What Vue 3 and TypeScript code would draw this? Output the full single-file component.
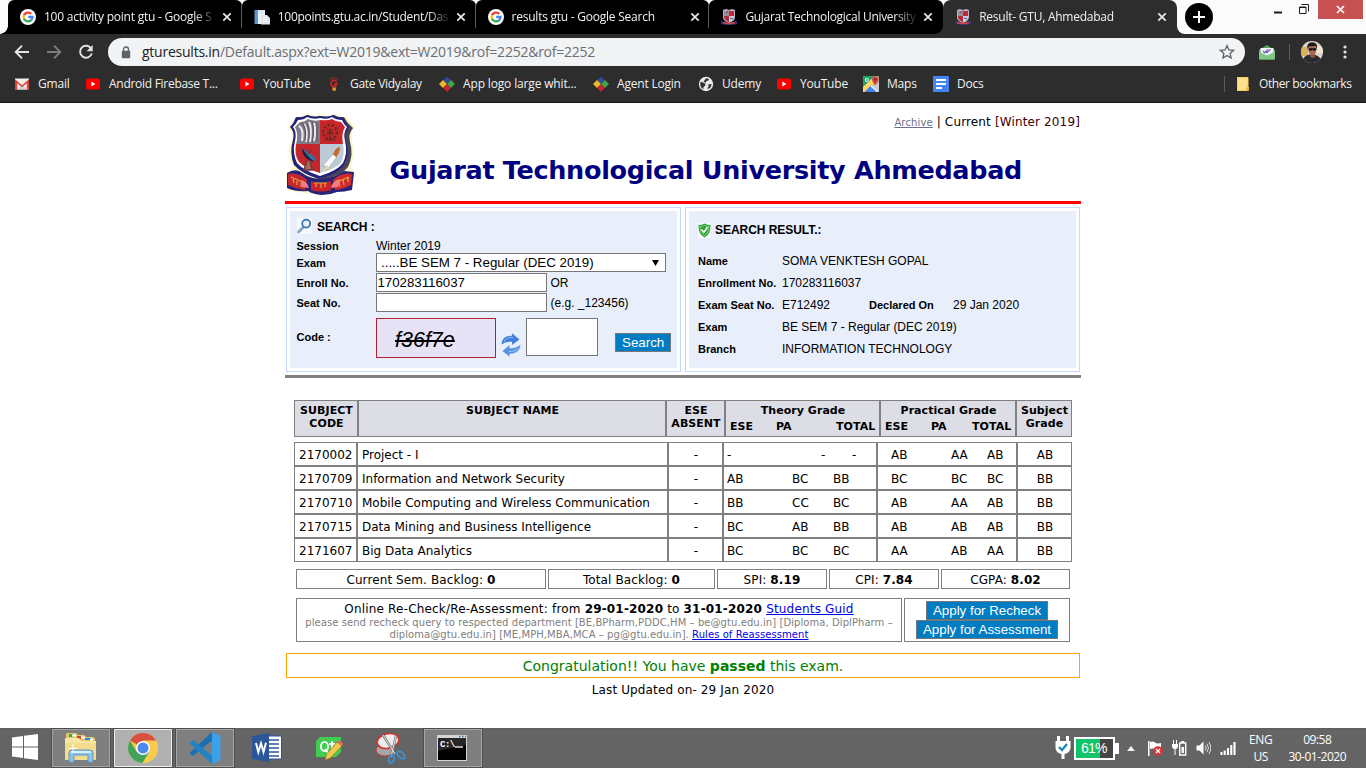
<script setup lang="ts">
interface Tab { title: string; icon: string; active?: boolean }
interface Bookmark { label: string; icon: string }
interface Subject {
  code: string
  name: string
  absent: string
  theory: [string, string, string]
  practical: [string, string, string]
  grade: string
}

const tabs: Tab[] = [
  { title: '100 activity point gtu - Google S', icon: 'google' },
  { title: '100points.gtu.ac.in/Student/Das', icon: 'page' },
  { title: 'results gtu - Google Search', icon: 'google' },
  { title: 'Gujarat Technological University', icon: 'crest-mini' },
  { title: 'Result- GTU, Ahmedabad', icon: 'crest-mini', active: true },
]

const bookmarks: Bookmark[] = [
  { label: 'Gmail', icon: 'gmail' },
  { label: 'Android Firebase T...', icon: 'youtube' },
  { label: 'YouTube', icon: 'youtube' },
  { label: 'Gate Vidyalay', icon: 'gate' },
  { label: 'App logo large whit...', icon: 'diamonds' },
  { label: 'Agent Login', icon: 'diamonds' },
  { label: 'Udemy', icon: 'globe' },
  { label: 'YouTube', icon: 'youtube' },
  { label: 'Maps', icon: 'maps' },
  { label: 'Docs', icon: 'docs' },
]

const subjects: Subject[] = [
  { code: '2170002', name: 'Project - I', absent: '-', theory: ['-', '-', '-'], practical: ['AB', 'AA', 'AB'], grade: 'AB' },
  { code: '2170709', name: 'Information and Network Security', absent: '-', theory: ['AB', 'BC', 'BB'], practical: ['BC', 'BC', 'BC'], grade: 'BB' },
  { code: '2170710', name: 'Mobile Computing and Wireless Communication', absent: '-', theory: ['BB', 'CC', 'BC'], practical: ['AB', 'AA', 'AB'], grade: 'BB' },
  { code: '2170715', name: 'Data Mining and Business Intelligence', absent: '-', theory: ['BC', 'AB', 'BB'], practical: ['AB', 'AB', 'AB'], grade: 'BB' },
  { code: '2171607', name: 'Big Data Analytics', absent: '-', theory: ['BC', 'BC', 'BC'], practical: ['AA', 'AB', 'AA'], grade: 'BB' },
]

const totals = [
  { label: 'Current Sem. Backlog:', value: '0' },
  { label: 'Total Backlog:', value: '0' },
  { label: 'SPI:', value: '8.19' },
  { label: 'CPI:', value: '7.84' },
  { label: 'CGPA:', value: '8.02' },
]
</script>

<template>
  <div class="screen">
    <svg class="defs" width="0" height="0">
      <symbol id="google" viewBox="0 0 16 16">
        <circle cx="8" cy="8" r="8" fill="#fff" />
        <g fill="none" stroke-width="2.3">
          <path d="M4 6.2A4.6 4.6 0 0 1 11.3 4.8" stroke="#ea4335" />
          <path d="M4 6.1A4.6 4.6 0 0 0 4 9.9" stroke="#fbbc05" />
          <path d="M4 9.8A4.6 4.6 0 0 0 11 11.4" stroke="#34a853" />
          <path d="M8.2 8H12.5A4.6 4.6 0 0 1 10.9 11.5" stroke="#4285f4" />
        </g>
      </symbol>
      <symbol id="page" viewBox="0 0 16 16">
        <path d="M1 1h10v14H1z" fill="#eef3f9" />
        <path d="M.5 1h3.500v14H.5z" fill="#5f97cf" />
        <path d="M5 2h5M5 4h4" stroke="#c3d4e6" />
        <path d="M7 6h6l3 3v6.500H7z" fill="#dfe4ea" />
        <path d="M9 8.500h4M9 10.500h5M9 12.500h5" stroke="#fff" />
      </symbol>
      <symbol id="crest-mini" viewBox="0 0 16 16">
        <path d="M2 1l3-1 3 1 3-1 3 1v7q0 4-6 6Q2 12 2 8z" fill="#b9b2c6" />
        <path d="M3 2h5v5H3z" fill="#9c8b95" />
        <path d="M8 2h5v5H8z" fill="#c02a35" />
        <path d="M3 7h5v6Q3 11 3 7z" fill="#b32838" />
        <path d="M8 7h5q0 4-5 6z" fill="#c9d3dd" />
        <path d="M9 9l3 1M5 4l2-2" stroke="#55507a" />
        <path d="M0 12q4 1 8 2 4-1 8-2v3q-4 1-8 1-4 0-8-1z" fill="#3a3274" />
        <path d="M2 13.5q6 2 12 0" stroke="#d8474a" stroke-width="1.4" fill="none" />
      </symbol>
      <symbol id="gmail" viewBox="0 0 16 16">
        <path d="M1 2.5h14v11H1z" fill="#f3efee" />
        <path d="M3 13.5l5-5 5 5z" fill="#d9d5d4" />
        <path d="M1 3.2l7 6 7-6v10.3h-2.2V7.2L8 11.2 3.2 7.2v6.3H1z" fill="#db4437" />
      </symbol>
      <symbol id="youtube" viewBox="0 0 16 16">
        <rect x="1" y="2.5" width="14" height="11" rx="2.6" fill="#f00" />
        <path d="M6.4 5.6v4.8L10.4 8z" fill="#fff" />
      </symbol>
      <symbol id="gate" viewBox="0 0 16 16">
        <path d="M3.500 3.500Q8 .2 12.500 3.500" stroke="#753126" stroke-width="1.300" fill="none" />
        <path d="M11 5.800Q8 3 5.600 5.500 3.800 8.500 6.600 10.200 9.500 11 11 8.200H8" stroke="#c4262c" stroke-width="1.700" fill="none" />
        <path d="M6 11.500h4.400L9.400 15H7z" fill="#e58a2c" />
      </symbol>
      <symbol id="diamonds" viewBox="0 0 16 16">
        <path d="M8 .5l3.600 3.600L8 7.700 4.400 4.100z" fill="#31499b" />
        <path d="M4 4.100l4 3.900-4 3.900L0 8z" fill="#eab92d" />
        <path d="M12 4.100L16 8l-4 3.900L8 8z" fill="#3ea44e" />
        <path d="M8 8.300l3.800 3.700L8 15.700l-3.800-3.700z" fill="#cd2434" />
      </symbol>
      <symbol id="globe" viewBox="0 0 16 16">
        <circle cx="8" cy="8" r="7.200" fill="#e8eaed" />
        <path d="M2.600 5.800L5 6.600l2.500 1.200-.3 2-1.500 1-.5 2.500Q2 11 2.200 7.500zM8 2.200l3 .9-.5 1.500-2 .4-.8 1.700-2.200-1zM10 8.400l3.600-.4q0 3-2.600 4.800l-2-.6 1.800-1.700z" fill="#323232" />
      </symbol>
      <symbol id="maps" viewBox="0 0 16 16">
        <rect width="16" height="16" rx="1.500" fill="#c9cdd0" />
        <path d="M0 1.500Q0 0 1.500 0H11L0 13z" fill="#1fa463" />
        <path d="M0 11L8.500 3 11 8 2.500 16H0z" fill="#fdd663" />
        <path d="M1.500 16L8.700 8.500 16 16z" fill="#4285f4" />
        <path d="M8 9.500l7 6.500" stroke="#e9edf2" stroke-width="1.800" />
        <path d="M12 9.500Q9 6 9 3.500a3.300 3.300 0 0 1 6.600 0Q15.600 6 12 9.500z" fill="#db4437" />
        <circle cx="12.300" cy="3.500" r="1.200" fill="#7b231b" />
        <circle cx="3.800" cy="4" r="1.500" fill="none" stroke="#fff" />
      </symbol>
      <symbol id="docs" viewBox="0 0 16 16">
        <rect width="16" height="16" rx="1.300" fill="#4285f4" />
        <path d="M3 4h10M3 8h10M3 12h6" stroke="#fff" stroke-width="1.800" />
      </symbol>
    </svg>

    <header class="browser">
      <div class="tabstrip">
        <div v-for="(tab, i) in tabs" :key="i" class="tab" :class="{ active: tab.active }">
          <svg class="ico16"><use :href="'#' + tab.icon" /></svg>
          <span class="tab-title">{{ tab.title }}</span>
          <svg class="tab-x" viewBox="0 0 10 10"><path d="M1.300 1.300l7.400 7.400M8.700 1.300L1.300 8.700" stroke="#e8eaed" stroke-width="1.700" /></svg>
        </div>
        <div class="frame">
          <svg class="newtab" viewBox="0 0 28 28"><circle cx="14" cy="14" r="14" /><path d="M14 8v12M8 14h12" stroke="#fff" stroke-width="2" /></svg>
          <div class="winbtns">
            <svg class="wmin" viewBox="0 0 8 3"><path d="M0 1.500h8" stroke="#1b1b1b" stroke-width="2" /></svg>
            <svg class="wmax" viewBox="0 0 10 10"><path d="M2.500.5h7v7M.5 3h6.500v6.500H.5zM.5 3.500H7" fill="none" stroke="#1b1b1b" /></svg>
            <span class="wclose"><svg viewBox="0 0 9 9"><path d="M1 1l7 7M8 1L1 8" stroke="#fff" stroke-width="1.700" /></svg></span>
          </div>
        </div>
      </div>

      <div class="toolbar">
        <svg class="nav" viewBox="0 0 16 16"><path d="M15 8H2M8 1.700L1.700 8 8 14.300" fill="none" stroke="#e4e4e4" stroke-width="1.900" /></svg>
        <svg class="nav" viewBox="0 0 16 16"><path d="M1 8h13M8 1.700L14.300 8 8 14.300" fill="none" stroke="#7c7c7c" stroke-width="1.900" /></svg>
        <svg class="nav" viewBox="0 0 16 16"><path d="M13.200 4.600A6 6 0 1 0 13.800 9.500" fill="none" stroke="#e4e4e4" stroke-width="1.900" /><path d="M14.700 1v6.200H8.500z" fill="#e4e4e4" /></svg>
        <div class="omnibox">
          <svg class="lock" viewBox="0 0 10 13"><path d="M2.500 5.500V3.500a2.500 2.500 0 0 1 5 0v2" fill="none" stroke="#5f6368" stroke-width="1.400" /><rect x=".8" y="4.800" width="8.400" height="7.400" rx="1" fill="#5f6368" /></svg>
          <span class="url"><b>gturesults.in</b>/Default.aspx?ext=W2019&amp;ext=W2019&amp;rof=2252&amp;rof=2252</span>
          <svg class="star" viewBox="0 0 16 16"><path d="M8 1.600l1.900 4.300 4.700.4-3.500 3.100 1 4.600L8 11.600 3.900 14l1-4.600L1.400 6.300l4.700-.4z" fill="none" stroke="#5f6368" stroke-width="1.300" /></svg>
        </div>
        <svg class="mail" viewBox="0 0 16 15"><path d="M0 5l8-5 8 5v8.500q0 1-1 1H1q-1 0-1-1z" fill="#57a65b" /><path d="M1.500 3h13v6L8 11.500 1.500 9z" fill="#f2f3fb" /><path d="M4 6l1.700 1.700L9 4.400M7 6.900l.8.8L11.500 4.400" stroke="#5a55b8" stroke-width="1.200" fill="none" /><path d="M0 6.500l8 4L16 6.500v7q0 1-1 1H1q-1 0-1-1z" fill="#81c784" /></svg>
        <i class="sep"></i>
        <svg class="avatar" viewBox="0 0 22 22">
          <clipPath id="round"><circle cx="11" cy="11" r="11" /></clipPath>
          <g clip-path="url(#round)"><path d="M0 0h22v22H0z" fill="#d9d5c9" /><path d="M0 6h7v9H0z" fill="#d8b15d" /><path d="M16 5h6v7h-6z" fill="#eee7cf" /><path d="M1 22q1-8 8-8.500Q20 13 21 22z" fill="#2b2a32" /><path d="M9 12h5v4l-2 1-3-1z" fill="#8a5542" /><ellipse cx="11.300" cy="8.800" rx="3.900" ry="5.200" fill="#a86c52" /><path d="M6.300 8Q5.500 1.500 11 1.300q6 0 5 6.700l-1.500-3-6 .2z" fill="#1e1718" /><path d="M7.500 7.300h8l-.5 2.200h-2.700l-.6-1-.7 1H8z" fill="#101014" /></g>
        </svg>
        <svg class="dots" viewBox="0 0 4 14"><circle cx="2" cy="2" r="1.600" /><circle cx="2" cy="7" r="1.600" /><circle cx="2" cy="12" r="1.600" /></svg>
      </div>

      <nav class="bookmarks">
        <a v-for="(b, i) in bookmarks" :key="i" class="bm"><svg class="ico16"><use :href="'#' + b.icon" /></svg><span>{{ b.label }}</span></a>
        <i class="sep"></i>
        <a class="bm other"><svg class="folder" viewBox="0 0 12 14"><path d="M0 0h11v10h1v3l-1 1H0z" fill="#fde08a" /><path d="M.5.500h10.500v10h-1.500v3H.5z" fill="none" stroke="#f3cd5c" /><path d="M10 10.500h2V13l-1 1h-1z" fill="#e6ad2e" /></svg><span>Other bookmarks</span></a>
      </nav>
    </header>

    <main class="page">
      <section class="masthead">
        <svg class="crest" viewBox="0 0 70 84">
          <path d="M10 4Q15 6 21 1.500q7 3.500 14 0 7 3.500 14 0Q55 6 61 4q2 5 8 11-5 5-3 13 4 14-1 27l5 8-4 15Q52 76 36 83 20 82 1 78l-1-17 7-6Q-1 42 5 28 8 20 1 15 8 10 10 4z" fill="#fbf8cf" />
          <path d="M12 5q5 1 10-2 6 3 13 1 8 2 13-1 5 3 10 2 3 6 9 11-5 6-3 14 4 13-2 25-6 8-24 13-18-5-26-14Q6 40 10 28 12 20 6 15q4-3 6-10z" fill="#4b4653" />
          <path d="M10 5q6 1 11-2 6 3 13 1 8 2 13-1 5 3 10 2 2 6 6 10-5 6-3 14 4 13-2 24-6 9-25 14-17-5-25-14Q3 40 7 28 9 20 4 15q4-4 6-10z" fill="#23237f" />
          <path d="M12 8q6 0 9-3 7 3 13 1 8 2 12-1 4 3 10 3 2 5 5 7-4 6-2 14 3 12-2 22-6 8-23 13-16-5-23-13Q6 40 9 29 11 20 7 15q3-3 5-7z" fill="#fff" />
          <path d="M14 10q5 0 8-3 7 3 12 1v24H10Q13 23 9 15z" fill="#7f7887" />
          <path d="M34 8q8 1 12-1 4 3 9 3l4 5q-4 7-2 17H34z" fill="#c9262b" />
          <path d="M10 32h24v29Q20 57 13 50 8 43 10 32z" fill="#c5262c" />
          <path d="M34 32h23q2 11-2 19-6 6-21 10z" fill="#bccbd6" />
          <path d="M13 14q5 3 3 15M18 12q4 5 2 18M23 10q3 6 1 20M28 11q2 7 0 18" stroke="#e9e9ee" stroke-width="2.200" fill="none" />
          <path d="M16 11q5 5 3 18M21 11q4 8 1 20M26 10q3 8 0 20M31 11v18" stroke="#5f5867" stroke-width="1.200" fill="none" />
          <circle cx="44" cy="20" r="7" fill="none" stroke="#6b2a22" stroke-width="2.500" stroke-dasharray="2.500 1.800" />
          <path d="M44 16v12M40 21h8M38 28h12M41 17l6 6M47 17l-6 6" stroke="#5c2a20" />
          <path d="M16 36l12 13q-4 1-8-3-4-4-4-10z" fill="#15213f" /><path d="M16 36l13 9q2 3-1 4-5-2-12-13z" fill="#3c6f9e" /><path d="M22 42l4-5M21 49l-3 9h8l-2-9" stroke="#6e3e3c" stroke-width="1.600" fill="#a76a62" />
          <path d="M38 52l9-10 4 3-6 8-3 5-1-4-4 1z" fill="#f7f8fa" stroke="#8696a5" stroke-width=".6" /><path d="M47 42q2-6 7-7 0 6-4 10z" fill="#c86a2e" /><path d="M37 59l4-4 2 2" stroke="#e4d7a8" stroke-width="2" fill="none" />
          <path d="M1 61q6-4 12-2l8 5q13 6 28 0l9-5 10 1-2 18q-8 2-15 2-7 3-15 3-10-1-14-4Q10 80 1 76z" fill="#282579" />
          <path d="M2 62q10-2 19 6l-2 10Q10 77 2 73z" fill="#c52831" /><path d="M66 62q-10-2-19 6l2 10q9-1 16-5z" fill="#d02a31" /><path d="M25 69q9 4 20 0v9q-10 3-20 0z" fill="#c9232b" />
          <path d="M15 68q6 1 8 8l-7-1zM54 67q-8 2-9 9l7-1z" fill="#ef7c89" />
          <path d="M5 65l11 5M7 67l1 4M11 69l0 4M15 71v4M51 70l12-5M53 70l1 5M57 68l1 5M62 66v4M28 71h13M30 71v4M35 71v5M39 71v4" stroke="#e7a23a" stroke-width="1.200" />
        </svg>
        <div class="heading">
          <p class="session-nav"><a>Archive</a> | Current <span>[Winter 2019]</span></p>
          <h1>Gujarat Technological University Ahmedabad</h1>
        </div>
      </section>

      <section class="panels">
        <div class="panel">
          <div class="fill search">
            <h2><svg class="lens" viewBox="0 0 15 16"><path fill="#f7f9fc" d="M0 0h15v16H0z" /><path d="M6 9.500L1.500 14" stroke="#7fa3c8" stroke-width="2.600" stroke-linecap="round" /><circle cx="9.200" cy="5.600" r="4" fill="#e3f0fb" stroke="#356fa6" stroke-width="1.700" /></svg>SEARCH :</h2>
            <div class="row r-session"><label>Session</label><span>Winter 2019</span></div>
            <div class="row"><label>Exam</label><div class="box select"><span>.....BE SEM 7 - Regular (DEC 2019)</span><svg viewBox="0 0 7 6"><path d="M0 0h7L3.500 6z" /></svg></div></div>
            <div class="row"><label>Enroll No.</label><div class="box input">170283116037</div><span class="hint">OR</span></div>
            <div class="row"><label>Seat No.</label><div class="box input"></div><span class="hint">(e.g. _123456)</span></div>
            <div class="row r-code">
              <label>Code :</label>
              <div class="captcha"><span>f36f7e</span></div>
              <svg class="refresh" viewBox="0 0 20 24"><path d="M.5 11.500Q1 2.500 11 2.800L11 .3l7.500 6.200L11 12V8.800Q5 8 .5 11.500z" fill="#4380d8" /><path d="M3 9q2-5 9-4.500" stroke="#8db8f2" fill="none" /><path d="M19.500 11.500q-1 9.500-11 9.300v2.900L1.500 18 8.500 12v3.200q6 .8 11-3.700z" fill="#5a92e4" /><path d="M17 15.500q-3 3.500-9 3" stroke="#a3c6f6" fill="none" /></svg>
              <div class="box codebox"></div>
              <button class="btn">Search</button>
            </div>
          </div>
        </div>
        <div class="panel">
          <div class="fill result">
            <h2><svg class="shield" viewBox="0 0 13 15"><path fill="#f7f9fc" d="M0 0h13v15H0z" /><path d="M.5 2Q4 2 6.500.5 9 2 12.500 2q.5 9-6 12.500Q0 11 .5 2z" fill="#2fa137" /><path d="M2 3.500q3 0 4.500-1 2 1 4.500 1 0 6-4.500 9Q2 9.500 2 3.500z" fill="none" stroke="#9be08d" stroke-width=".8" /><path d="M3.500 6.500L6 9.200l3.500-5" stroke="#fff" stroke-width="1.500" fill="none" /></svg>SEARCH RESULT.:</h2>
            <dl>
              <dt>Name</dt><dd>SOMA VENKTESH GOPAL</dd>
              <dt>Enrollment No.</dt><dd>170283116037</dd>
              <dt>Exam Seat No.</dt><dd class="pair"><span>E712492</span><b>Declared On</b><span>29 Jan 2020</span></dd>
              <dt>Exam</dt><dd>BE SEM 7 - Regular (DEC 2019)</dd>
              <dt>Branch</dt><dd>INFORMATION TECHNOLOGY</dd>
            </dl>
          </div>
        </div>
      </section>

      <section class="grades">
        <div class="thead">
          <div>SUBJECT<br>CODE</div>
          <div>SUBJECT NAME</div>
          <div>ESE<br>ABSENT</div>
          <div>Theory Grade<p class="sub theory-sub"><span>ESE</span><span>PA</span><span>TOTAL</span></p></div>
          <div>Practical Grade<p class="sub practical-sub"><span>ESE</span><span>PA</span><span>TOTAL</span></p></div>
          <div>Subject<br>Grade</div>
        </div>
        <div v-for="s in subjects" :key="s.code" class="trow">
          <div>{{ s.code }}</div>
          <div>{{ s.name }}</div>
          <div class="mid">{{ s.absent }}</div>
          <div class="theory" :class="{ none: s.theory[0] === '-' }"><span v-for="(g, i) in s.theory" :key="i">{{ g }}</span></div>
          <div class="practical"><span v-for="(g, i) in s.practical" :key="i">{{ g }}</span></div>
          <div class="mid">{{ s.grade }}</div>
        </div>
      </section>

      <section class="totals">
        <div v-for="t in totals" :key="t.label">{{ t.label }} <b>{{ t.value }}</b></div>
      </section>

      <section class="recheck">
        <div>
          <p class="dates">Online Re-Check/Re-Assessment: from <b>29-01-2020</b> to <b>31-01-2020</b> <a>Students Guid</a></p>
          <p class="small">please send recheck query to respected department [BE,BPharm,PDDC,HM – be@gtu.edu.in] [Diploma, DiplPharm –<br>diploma@gtu.edu.in] [ME,MPH,MBA,MCA – pg@gtu.edu.in]. <a>Rules of Reassessment</a></p>
        </div>
        <div class="apply"><button class="btn">Apply for Recheck</button><button class="btn">Apply for Assessment</button></div>
      </section>

      <p class="congrats">Congratulation!! You have <b>passed</b> this exam.</p>
      <p class="updated">Last Updated on- 29 Jan 2020</p>
    </main>

    <footer class="taskbar">
      <div class="start"><svg width="26" height="26" viewBox="0 0 26 26"><path d="M0 3.500L11 2v10.500H0zM12 1.800L26 0v12.500H12zM0 13.500h11V24L0 22.500zM12 13.500h14V26l-14-1.800z" fill="#fff" /></svg></div>
      <div class="app open"><svg width="34" height="32" viewBox="0 0 34 32">
        <path d="M2 2q0-1 1-1h9l2 2h6l2 2h7q2 0 2 2v19H2z" fill="#e7c56a" /><path d="M5 2h4v3H5z" fill="#2cae4e" /><path d="M13 4h4v3h-4z" fill="#d8432f" /><path d="M21 6h6v2h-6z" fill="#2e8bd8" /><path d="M8 2.500h4v2H8zM17 4.500h4v2h-4zM26 6.500h3v2h-3z" fill="#fff" />
        <path d="M1 6h14l2 3h15v19H1z" fill="#f8e7a3" /><path d="M1 11h31v17H1z" fill="#f3dc8b" />
        <path d="M5 30v-9q0-3 3-3h18q3 0 3 3v9h-5v-7H10v7z" fill="#8fc3e6" stroke="#5d9ac9" /><path d="M7 20h20" stroke="#d7effb" stroke-width="2" /><path d="M9 12v9M5 16.500h8" stroke="#fff" />
      </svg></div>
      <div class="app open front"><svg width="30" height="30" viewBox="0 0 30 30">
        <circle cx="15" cy="15" r="15" fill="#f7c948" /><path d="M15 15L2.010 7.500A15 15 0 0 1 28 7.500H15z" fill="#d95040" /><path d="M2.010 7.500A15 15 0 0 0 14.500 30L21.500 18.700 15 15 8.500 18.700z" fill="#41a35b" /><path d="M15 8H28.300A15 15 0 0 1 14.500 30L21.500 18.700z" fill="#f7cb4d" /><circle cx="15" cy="15" r="7" fill="#fff" /><circle cx="15" cy="15" r="5.500" fill="#4c88ee" />
      </svg></div>
      <div class="app open"><svg width="32" height="32" viewBox="0 0 32 32"><path d="M23 0v8.500L4 24l-3.500-3z" fill="#1c6fb0" /><path d="M.5 11L4 8l19 15.500V32z" fill="#2382c4" /><path d="M23 0l8.500 4v24L23 32z" fill="#3aa0e8" /></svg></div>
      <div class="app"><svg width="30" height="30" viewBox="0 0 30 30"><path d="M14 3h15.500v23H14z" fill="#fff" stroke="#2b579a" /><path d="M17 7h10M17 11h10M17 15h10M17 19h10M17 23h10" stroke="#2b579a" stroke-width="1.500" /><path d="M0 3l17-3v29L0 26z" fill="#2b579a" /><path d="M4 10l2.300 9 2.700-8.500L11.500 19 14 9.800" fill="none" stroke="#fff" stroke-width="2" /></svg></div>
      <div class="app"><svg width="28" height="26" viewBox="0 0 28 26"><path d="M5 2h21v15l-5 5H1V6z" fill="#41cd52" /><ellipse cx="9.500" cy="11.500" rx="3.600" ry="4.600" fill="none" stroke="#fff" stroke-width="1.800" /><path d="M10 14l3 4M17 6v9q0 2 3 1.500M14.500 9H20" fill="none" stroke="#fff" stroke-width="1.800" /><path d="M10 25l1.500-6L22 7l5 4-11.500 12z" fill="#f1c94b" stroke="#8d6a26" stroke-width=".7" /><path d="M22 7l2-2 4.500 4L27 11z" fill="#de6f5c" /></svg></div>
      <div class="app"><svg width="30" height="31" viewBox="0 0 30 31"><ellipse cx="9" cy="17" rx="9" ry="6" fill="#a6a6a6" stroke="#c4423b" /><ellipse cx="12" cy="8" rx="11" ry="7.300" transform="rotate(-12 12 8)" fill="#eee" stroke="#d2332d" stroke-width="1.700" /><path d="M7 2l12 19M20 3l-5 21" stroke="#777" stroke-width="2.400" /><path d="M7 2l12 19M20 3l-5 21" stroke="#e4e4e4" /><ellipse cx="15.500" cy="26" rx="2.600" ry="4" transform="rotate(20 15 26)" fill="none" stroke="#3f8fce" stroke-width="2" /><ellipse cx="25" cy="22" rx="2.600" ry="4.400" transform="rotate(-45 25 22)" fill="none" stroke="#3f8fce" stroke-width="2" /></svg></div>
      <div class="app open cmd"><svg width="30" height="26" viewBox="0 0 30 26"><path d="M0 0h30v26H0z" fill="#d5d5d5" /><path d="M1 3h28v22H1z" fill="#000" /><path d="M1 3h28v7L1 16z" fill="#262626" /><path d="M22 1.500h1.500M25 1.500h1.500M28 1.500h1" stroke="#526b91" stroke-width="1.500" /><text x="3" y="12">C:\</text><path d="M18 12h8" stroke="#fff" stroke-width="1.300" /></svg></div>

      <div class="tray">
        <svg width="16" height="24" viewBox="0 0 16 24"><path d="M2 0h3v5h6V0h3v5h1.500v7Q15 17 9.500 18v5h-3v-5Q1 17 .5 12V5H2z" fill="#fff" /><path d="M4 11l3 3 5-6" stroke="#2287b8" stroke-width="2.300" fill="none" /></svg>
        <div class="battery"><i></i><span>61%</span></div>
        <svg class="t-up" width="8" height="5" viewBox="0 0 8 5"><path d="M0 5l4-5 4 5z" fill="#f2f2f2" /></svg>
        <svg class="t-flag" width="16" height="16" viewBox="0 0 16 16"><path d="M1 1h1.500v15H1z" fill="#fff" /><path d="M3 2q3-1 5 .5t6 .5v7q-3 1-5.500-.5T3 9z" fill="#fff" /><circle cx="11" cy="11" r="4.800" fill="#d83232" /><path d="M9 9l4 4M13 9l-4 4" stroke="#fff" stroke-width="1.400" /></svg>
        <svg class="t-power" width="15" height="16" viewBox="0 0 15 16"><path d="M1.500 0v4M4.500 0v4" stroke="#fff" /><path d="M0 4h6v3L4.500 9H1.500L0 7zM2.500 9h1v6h-1z" fill="#fff" /><path d="M7.700 3h6v12h-6z" fill="none" stroke="#fff" stroke-width="1.400" /><path d="M9.200 1h3v2h-3zM9.500 7h2.500v6H9.500z" fill="#fff" /></svg>
        <svg class="t-vol" width="15" height="14" viewBox="0 0 15 14"><path d="M.5 4.500h3L7.500.500v13l-4-4h-3z" fill="#fff" /><path d="M9.300 4.500q1.500 2.500 0 5M11 2.800q3 4.200 0 8.400M12.800 1q4 6 0 12" fill="none" stroke="#ddd" /></svg>
        <svg class="t-net" width="16" height="13" viewBox="0 0 16 13"><path d="M1.500 10v3M4.700 8.500V13M8 6v7M11.300 3v10M14.500 0v13" stroke="#fff" stroke-width="2.100" /></svg>
        <div class="lang">ENG<br>US</div>
        <div class="clock">09:58<br>30-01-2020</div>
      </div>
    </footer>
  </div>
</template>

<style>
html, body { margin: 0; overflow: hidden; background: #fff; }
</style>

<style scoped>
.screen { width: 1366px; height: 768px; display: flex; flex-direction: column; background: #fff; color: #000; overflow: hidden; font-family: "DejaVu Sans", Verdana, sans-serif; font-size: 12px; }
.screen * { box-sizing: border-box; }
p, h1, h2, dl, dd { margin: 0; }
svg { display: block; flex: none; }
.defs { position: absolute; }
.ico16 { width: 16px; height: 16px; }

/* Browser frame */
.browser { height: 103px; flex: none; background: #2d2d2d; border-bottom: 1px solid #191919; color: #f1f1f1; font: 12px/16px "Open Sans", "Noto Sans", sans-serif; }
.tabstrip { height: 34px; display: flex; background: linear-gradient(90deg, #fbfbfb 0 1177px, #2d2d2d 1177px); position: relative; padding-left: 8px; }
.tabstrip::before { content: ""; position: absolute; left: 0; bottom: 0; width: 8px; height: 8px; background: radial-gradient(circle at 0 0, #fbfbfb 7.5px, #000 8px); }
.tab { width: 233.8px; flex: none; height: 34px; background: #000; border-radius: 6px 6px 0 0; display: flex; align-items: center; padding-left: 12px; position: relative; }
.tab:nth-child(-n+3)::after { content: ""; position: absolute; right: 0; top: 5px; width: 1px; height: 23px; background: #5c5c5c; }
.tab.active { background: #2d2d2d; border-radius: 8px 8px 0 0; }
.tab:nth-child(4)::after { content: ""; position: absolute; right: 0; bottom: 0; width: 8px; height: 8px; background: radial-gradient(circle at 0 0, #000 7.5px, #2d2d2d 8px); }
.tab-title { width: 172px; margin-left: 8px; white-space: nowrap; letter-spacing: -0.24px; mask-image: linear-gradient(90deg, #000 150px, rgba(0, 0, 0, 0.1) 171px); }
.tab:nth-child(2) .tab-title, .tab:nth-child(4) .tab-title { letter-spacing: -0.3px; }
.tab-x { width: 10px; height: 10px; margin-left: 6px; }
.frame { flex: 1; background: #fbfbfb; border-bottom-left-radius: 8px; display: flex; }
.newtab { width: 28px; height: 28px; margin: 3px 0 0 8px; }
.winbtns { margin-left: auto; display: flex; padding-right: 3px; }
.wmin { width: 8px; height: 3px; margin: 11px 17px 0 0; }
.wmax { width: 10px; height: 10px; margin: 4px 9px 0 0; }
.wclose { width: 45px; height: 19px; background: #c75050; display: grid; place-items: center; }
.wclose svg { width: 9px; height: 9px; }

.toolbar { height: 36px; display: flex; align-items: center; padding-left: 14px; }
.nav { width: 16px; height: 16px; margin-right: 16px; }
.omnibox { width: 1137px; height: 28px; margin-left: -2px; border-radius: 14px; background: #f1f3f4; display: flex; align-items: center; padding: 0 10px 0 13px; color: #6b6e72; }
.lock { width: 10px; height: 13px; }
.url { margin: -1px auto 0 11px; font-size: 14px; line-height: 20px; letter-spacing: -0.24px; white-space: nowrap; }
.url b { font-weight: 400; color: #202124; }
.star { width: 16px; height: 16px; }
.mail { width: 16px; height: 15px; margin-left: 14px; }
.sep { width: 1px; height: 16px; background: #5c5c5c; }
.toolbar .sep { margin: 0 11px 0 14px; }
.avatar { width: 22px; height: 22px; }
.dots { width: 4px; height: 14px; margin-left: 20px; fill: #e4e4e4; }

.bookmarks { height: 28px; padding-left: 14px; display: grid; grid-template-columns: 71px 154px 87px 113px 154px 105px 78px 87px 70px 291px 13px 1fr; align-items: center; }
.bm { display: flex; align-items: center; gap: 8px; white-space: nowrap; letter-spacing: -0.2px; }
.bm:nth-child(2), .bm:nth-child(3), .bm:nth-child(4) { letter-spacing: -0.28px; }
.bm:nth-child(5) { letter-spacing: -0.15px; }
.folder { width: 12px; height: 14px; }
.bm.other { gap: 10px; letter-spacing: -0.4px; }

/* Result page */
.page { width: 796px; height: 625px; margin-left: 285px; flex: none; }
.masthead { height: 101px; display: flex; border-bottom: 3px solid #f00; }
.crest { width: 70px; height: 84px; margin: 9px 0 0 1px; }
.heading { flex: 1; }
.session-nav { height: 36px; line-height: 38px; text-align: right; padding-right: 1px; letter-spacing: 0.14px; }
.session-nav a { font-size: 10px; color: #6b6f8a; text-decoration: underline; }
.session-nav span { color: #400000; }
h1 { margin-left: 33.500px; font-size: 25.500px; line-height: 62px; font-weight: 700; letter-spacing: -0.32px; color: #000080; white-space: nowrap; }

.panels { height: 174px; display: flex; gap: 4px; padding: 3px 1px 0; border-bottom: 3px solid #808080; }
.panel { width: 395px; height: 165px; border: 1px solid #c3d9ff; padding: 3px; }
.fill { height: 157px; background: #e8eefa; font: 12px/14px "Liberation Sans", Arial, sans-serif; }
.fill h2 { display: flex; align-items: center; font-size: 12px; font-weight: 700; letter-spacing: -0.05px; }
.lens { width: 15px; height: 16px; margin: -3px 5px 0 1px; }
.search { padding: 5px 0 0 6px; }
.search h2 { height: 22px; }
.row { height: 20px; display: flex; align-items: center; }
.row label { width: 79.500px; margin-left: 0.500px; font-weight: 700; font-size: 11px; }
.r-session { height: 15px; padding-top: 1px; }
.box { border: 1px solid #767676; background: #fff; font-size: 13.330px; }
.select { width: 290px; height: 19px; margin-top: -1px; display: flex; align-items: center; justify-content: space-between; padding: 0 6px 0 4px; }
.select svg { width: 7px; height: 6px; }
.input { width: 171px; height: 19px; margin-top: -1px; line-height: 18px; padding-left: 0.500px; letter-spacing: -0.05px; }
.hint { margin-left: 3.500px; }
.r-code { height: 40px; margin-top: 5px; align-items: flex-start; }
.r-code label { line-height: 38px; }
.captcha { width: 120px; height: 40px; border: 1px solid #b52332; background: #e6e3f7; font: italic 21.500px/43px "Liberation Sans", Arial, sans-serif; padding-left: 18px; }
.captcha span { text-decoration: line-through 2px; }
.refresh { width: 20px; height: 24px; margin: 15px 5px 0; }
.codebox { width: 72px; height: 38px; }
.btn { height: 19px; padding: 0 6px; border: 1px solid #767676; background: #007cc3; color: #fff; font: 13.330px/16px "Liberation Sans", Arial, sans-serif; white-space: nowrap; }
.r-code .btn { margin: 15px 0 0 17px; width: 56px; }
.result { padding: 10px 0 0 9px; }
.result h2 { height: 18px; }
.shield { width: 13px; height: 15px; margin-right: 4px; }
dl { margin-top: 11px; display: grid; grid-template-columns: 84px 1fr; grid-auto-rows: 22px; line-height: 22px; }
dt, dd b { font-size: 11px; font-weight: 700; }
.pair { display: grid; grid-template-columns: 87px 84px 1fr; }

/* Grade table */
.grades { margin: 22px 9px 0; }
.thead { height: 37px; margin-bottom: 5px; display: grid; grid-template-columns: 64px 308px 59px 155px 136px 56px; font-size: 11px; font-weight: 700; line-height: 13px; text-align: center; }
.thead > div { background: #dddde6; border: 1px solid #808080; padding: 3px 0 0 1px; white-space: nowrap; letter-spacing: 0.05px; }
.sub { display: grid; padding-left: 3px; text-align: left; line-height: 13px; margin-top: 3px; }
.theory-sub { grid-template-columns: 46px 60px 1fr; }
.practical-sub { grid-template-columns: 46px 41px 1fr; }
.trow { height: 24px; display: grid; grid-template: 24px / 63px 311px 55px 154px 140px 55px; line-height: 24px; }
.trow > div { border: 1px solid #808080; padding-left: 4px; white-space: nowrap; }
.trow > .mid { text-align: center; padding: 0 0 0 1px; }
.trow > .theory { padding-left: 3px; display: grid; grid-template-columns: 65px 41px 1fr; }
.trow > .theory.none { grid-template-columns: 94px 31px 1fr; }
.trow > .practical { padding-left: 13px; display: grid; grid-template-columns: 60px 36px 1fr; }

.totals { height: 20px; margin: 7px 11px 0; display: grid; grid-template: 20px / 250px 167px 110px 110px 129px; gap: 2px; text-align: center; line-height: 20px; letter-spacing: 0.1px; }
.totals div { border: 1px solid #808080; }
.recheck { height: 44px; margin: 9px 11px 0; display: grid; grid-template: 44px / 606px 166px; gap: 2px; text-align: center; }
.recheck > div { border: 1px solid #808080; white-space: nowrap; }
.recheck a { color: #0000ee; text-decoration: underline; }
.dates { line-height: 20px; height: 18px; letter-spacing: 0.18px; }
.small { font-size: 10px; line-height: 12px; letter-spacing: 0.07px; color: #808080; }
.apply { padding-top: 2px; display: flex; flex-direction: column; align-items: center; }
.congrats { height: 25px; margin: 11px 1px 0; border: 1px solid #ffa500; text-align: center; font-size: 14px; line-height: 24px; color: #008000; }
.updated { text-align: center; line-height: 24px; letter-spacing: 0.14px; }

/* Windows taskbar */
.taskbar { height: 40px; flex: none; display: flex; background: linear-gradient(#5e5e5e, #656565 3px, #636363); font: 12px/17px "Open Sans", "Noto Sans", sans-serif; color: #fff; }
.start { width: 52px; display: flex; align-items: center; padding: 0 0 2px 12px; }
.app { width: 58px; height: 38px; margin: 1px 4px 0 0; display: grid; place-items: center; }
.open { border: 1px solid #a4a4a4; background: #7f7f7f; outline: 1px solid #4e4e4e; outline-offset: 0; }
.front { border-color: #f0f0f0; background: #b0b0b0; }
.cmd svg { margin-left: -2px; }
.app text { font: 700 9px "Liberation Mono", monospace; letter-spacing: -0.5px; fill: #fff; }
.tray { margin-left: auto; width: 312px; display: flex; align-items: center; padding-left: 1px; }
.battery { width: 41px; height: 23px; margin-left: 3px; border: 2px solid #fff; position: relative; background: #454545; display: flex; align-items: center; }
.battery::after { content: ""; position: absolute; right: -6px; top: 4px; width: 4px; height: 11px; background: #fff; }
.battery i { width: 24px; height: 19px; background: #10c469; }
.battery span { position: absolute; left: 5px; font: 14px/20px "Liberation Sans", sans-serif; letter-spacing: -0.8px; }
.t-up { margin-left: 12px; }
.t-flag { margin-left: 12px; }
.t-power { margin-left: 9px; }
.t-vol { margin-left: 9px; }
.t-net { margin-left: 9px; }
.lang { margin-left: 13px; text-align: center; letter-spacing: -0.35px; }
.clock { margin-left: 16px; text-align: center; letter-spacing: -0.5px; white-space: nowrap; }
</style>
